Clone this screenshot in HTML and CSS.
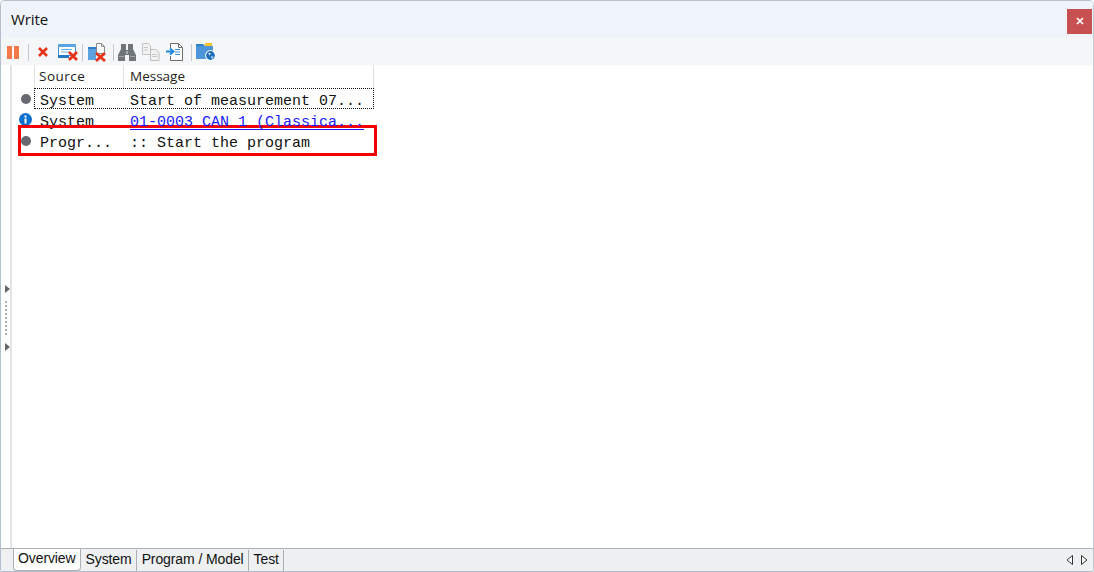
FILE: index.html
```html
<!DOCTYPE html>
<html lang="en">
<head>
<meta charset="utf-8">
<title>Write</title>
<link rel="stylesheet" href="styles.css">
</head>
<body>
<div class="window">
  <header class="titlebar">
    <span class="title">Write</span>
    <button class="close"><svg width="8" height="8" viewBox="0 0 8 8"><path d="M1 1l6 6M7 1L1 7" stroke="#fff" stroke-width="1.7"/></svg></button>
  </header>
  <div class="toolbar">
    <svg class="ic" width="12" height="13" viewBox="0 0 12 13"><path d="M0 0h5v13H0zM7 0h5v13H7z" fill="#f5784a"/></svg>
    <i class="sep s1"></i>
    <svg class="ic x" width="12" height="12" viewBox="0 0 12 12"><path d="M2 2l8 8M10 2l-8 8" stroke="#e8331c" stroke-width="2.600"/></svg>
    <svg class="ic" width="20" height="18" viewBox="0 0 20 18"><path d="M.5 1.500h17v11H.5z" fill="#fff" stroke="#3b8fd6"/><path d="M0 1h18v3H0z" fill="#58a6e6"/><path d="M3 6.500h11M3 9h8" stroke="#6aaee6"/><path d="M0 12h11v3H0z" fill="#2378c4"/><path d="M11 9l8 8M19 9l-8 8" stroke="#e8331c" stroke-width="2.800"/></svg>
    <i class="sep s2"></i>
    <svg class="ic" width="20" height="19" viewBox="0 0 20 19"><path d="M0 4h8v13H0z" fill="#5aa2e0"/><path d="M0 4h8v2H0z" fill="#2f7fc2"/><path d="M8.500.5h5l3 3v7h-8z" fill="#fff" stroke="#8a8a8a"/><path d="M13.500.5v3h3" fill="none" stroke="#8a8a8a"/><path d="M8 10l9 8M17 10l-9 8" stroke="#e8331c" stroke-width="2.800"/></svg>
    <i class="sep s3"></i>
    <svg class="ic" width="18" height="17" viewBox="0 0 18 17"><path d="M3 0h5v6h2V0h5v5l3 6v6h-7v-6H7v6H0v-6l3-6z" fill="#70757a"/><path d="M8 7h2v3H8z" fill="#a9adb0"/><path d="M1 12h5v1H1zM12 12h5v1h-5z" fill="#a0a4a8"/></svg>
    <svg class="ic l2" width="18" height="18" viewBox="0 0 18 18"><path d="M.5.500h6l2 2v9h-8z" fill="#f2f2f2" stroke="#c4c4c4"/><path d="M8.500 6.500h5l3.500 3v8h-8.500z" fill="#f2f2f2" stroke="#bdbdbd"/><path d="M10 11.500h5M10 13.500h5M2 4.500h4M2 7h4" stroke="#c8c8c8"/></svg>
    <svg class="ic l3" width="18" height="18" viewBox="0 0 18 18"><path d="M4.500 5V.5h8l4 4v13h-12V13" fill="#fff" stroke="#6d6d6d"/><path d="M12.500.5v4h4" fill="none" stroke="#6d6d6d"/><path d="M0 8.500h6M4 5.500l3.500 3-3.500 3" fill="none" stroke="#1e88dc" stroke-width="2"/><path d="M9 6.500h5M9 9h5M9 11.500h5" stroke="#3a8fd4"/></svg>
    <i class="sep s4"></i>
    <svg class="ic" width="20" height="18" viewBox="0 0 20 18"><path d="M0 1h7l2 2H0z" fill="#2f7fc2"/><path d="M9 0h7v3H9z" fill="#f4c430"/><path d="M0 3h17v13H0z" fill="#4b95d8"/><circle cx="14.500" cy="12.500" r="5.400" fill="#fff"/><circle cx="14.500" cy="12.500" r="4.400" fill="#1f6fc0"/><path d="M12 10h3l-1.500 2.500zM14.500 13.500h3l-1 2.500z" fill="#cfe4f7"/></svg>
  </div>
  <div class="body">
    <aside class="rail">
      <i class="tri"></i>
      <span class="dots"></span>
      <i class="tri"></i>
    </aside>
    <main class="log">
      <div class="head">
        <span class="col-icon"></span>
        <span class="col-src">Source</span>
        <span class="col-msg">Message</span>
      </div>
      <div class="row">
        <span class="col-icon"><i class="dot"></i></span>
        <div class="cells focus"><span class="src">System</span><span class="msg">Start of measurement 07...</span></div>
      </div>
      <div class="row">
        <span class="col-icon"><svg class="info" width="13" height="13" viewBox="0 0 13 13"><circle cx="6.500" cy="6.500" r="6.500" fill="#0b6fd0"/><path d="M5.500 2.500h2v2h-2zM5.500 5.500h2v5h-2z" fill="#fff"/></svg></span>
        <div class="cells"><span class="src">System</span><span class="msg link">01-0003 CAN 1 (Classica...</span></div>
      </div>
      <div class="row">
        <span class="col-icon"><i class="dot"></i></span>
        <div class="cells"><span class="src">Progr...</span><span class="msg">:: Start the program</span></div>
      </div>
      <div class="highlight"></div>
    </main>
  </div>
  <footer class="tabs">
    <div class="tab active">Overview</div>
    <div class="tab">System</div>
    <div class="tab">Program / Model</div>
    <div class="tab">Test</div>
    <div class="scroll">
      <svg width="8" height="10" viewBox="0 0 8 10"><path d="M6.500.5v9L1 5z" fill="#fff" stroke="#333"/></svg>
      <svg width="8" height="10" viewBox="0 0 8 10"><path d="M1.500.5v9L7 5z" fill="#fff" stroke="#333"/></svg>
    </div>
  </footer>
</div>
</body>
</html>
```
FILE: styles.css
```css
* { box-sizing: border-box; }
html, body { margin: 0; height: 100%; background: #fff; }
body { overflow: hidden; }
.window {
  width: 1094px; height: 572px;
  display: flex; flex-direction: column;
  border: 1px solid #b4bfcc;
  border-right-color: #c4ccd6;
  border-radius: 5px 5px 2px 2px;
  overflow: hidden;
  background: #fff;
}
.titlebar {
  height: 37px; flex: none;
  display: flex; align-items: center; justify-content: space-between;
  background: #eef4fa;
  padding: 0 1px 0 10px;
}
.title { font: 15px "Open Sans", "Noto Sans", sans-serif; color: #111; margin-top: -1px; letter-spacing: -.1px; }
.close {
  width: 25px; height: 25px; border: 0; padding: 0;
  background: #c75050; display: flex; align-items: center; justify-content: center;
  margin-top: 3px;
}
.toolbar {
  height: 27px; flex: none;
  display: flex; align-items: center;
  background: #f5f6f8;
  padding-left: 6px;
  padding-top: 1px;
}
.ic { display: block; flex: none; }
.sep { display: block; width: 1px; height: 17px; background: #c6c9cc; flex: none; }
.s1 { margin: 0 8px 0 9px; }
.x { margin-right: 9px; }
.s2 { margin: 0 5px 0 4px; }
.s3 { margin: 0 4px 0 5px; }
.l2 { margin-left: 6px; }
.l3 { margin-left: 6px; }
.s4 { margin: 0 4px 0 7px; }
.body { flex: 1; display: flex; min-height: 0; }
.rail {
  width: 11px; flex: none;
  border-right: 2px solid #e4e4e4;
  display: flex; flex-direction: column; align-items: flex-start;
  justify-content: center;
  padding: 22px 0 0 4px;
  gap: 8px;
}
.tri { display: block; width: 0; height: 0; border-left: 5px solid #666; border-top: 4px solid transparent; border-bottom: 4px solid transparent; }
.dots { display: block; width: 2px; height: 34px; background: repeating-linear-gradient(#aeb1b5 0 2px, transparent 2px 4px); }
.log { flex: 1; position: relative; padding-left: 3px; }
.head { display: flex; height: 23px; align-items: center; font: 13.500px "Open Sans", "Noto Sans", sans-serif; color: #222; }
.col-icon { width: 19px; flex: none; display: flex; justify-content: center; align-items: center; padding-left: 2px; }
.col-src { width: 90px; height: 23px; line-height: 23px; padding-left: 4px; border-left: 1px solid #e0e0e0; border-right: 1px solid #e0e0e0; flex: none; letter-spacing: .5px; }
.col-msg { width: 250px; height: 23px; line-height: 23px; padding-left: 6px; border-right: 1px solid #e0e0e0; flex: none; }
.row { display: flex; height: 21px; align-items: center; font: 15px/19px "Liberation Mono", monospace; color: #111; }
.cells { display: flex; width: 340px; height: 21px; align-items: center; border: 1px solid transparent; padding-top: 6px; }
.cells.focus { border: 1px dotted #111; }
.src { width: 95px; padding-left: 5px; flex: none; }
.msg { white-space: nowrap; }
.link { color: #1a1aff; text-decoration: underline; text-underline-offset: 3px; position: relative; z-index: 1; }
.dot { display: block; width: 10px; height: 10px; border-radius: 50%; background: #66696f; margin-top: 1px; }
.info { margin-top: 0; display: block; }
.highlight { position: absolute; left: 6px; top: 60px; width: 359px; height: 31px; border: 3px solid #f40000; pointer-events: none; }
.tabs {
  height: 23px; flex: none;
  display: flex; align-items: flex-end;
  background: #eef0f2;
  border-top: 1px solid #aab0b6;
  padding-left: 12px;
  font: 14px "Liberation Sans", Arial, sans-serif;
  letter-spacing: -.1px;
  color: #111;
}
.tab { height: 21px; line-height: 19px; padding: 0 4px 0 5px; border-right: 1px solid #aab0b6; flex: none; }
.tab.active { background: #fff; border: 1px solid #aab0b6; border-top: 0; border-radius: 0 0 4px 4px; margin-top: -1px; height: 22px; padding: 0 4px; }
.scroll { margin-left: auto; display: flex; gap: 6px; align-self: center; padding-right: 5px; }
.scroll svg { display: block; }
```
